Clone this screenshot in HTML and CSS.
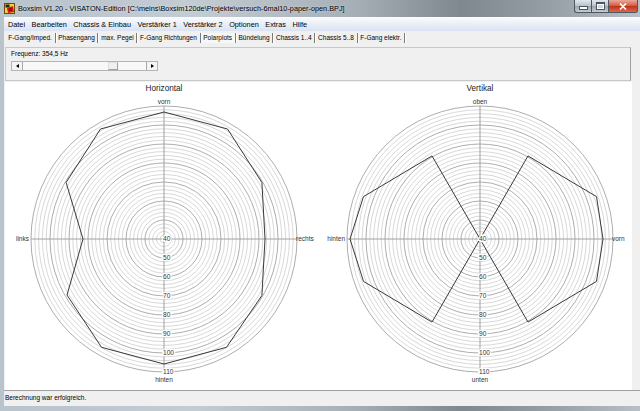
FILE: index.html
```html
<!DOCTYPE html>
<html lang="de">
<head>
<meta charset="utf-8">
<title>Boxsim</title>
<link rel="stylesheet" href="styles.css">
</head>
<body>
<div class="window">
  <div class="titlebar">
    <svg class="appicon" viewBox="0 0 11 11" width="11" height="11">
      <rect x="0.5" y="0.5" width="10" height="10" fill="#f2d23a" stroke="#6a4a10"/>
      <rect x="1.5" y="1.5" width="4" height="3" fill="#222"/>
      <path d="M3 5 L9 3 L10 9 L4 10 Z" fill="#d01818"/>
      <circle cx="6.5" cy="6.5" r="1.5" fill="#8a0a0a"/>
    </svg>
    <span class="title">Boxsim V1.20 - VISATON-Edition [C:\meins\Boxsim120de\Projekte\versuch-6mal10-paper-open.BPJ]</span>
    <div class="caption-buttons">
      <div class="cbtn cmin"><span class="glyph-min"></span></div>
      <div class="cbtn cmax"><span class="glyph-max"></span></div>
      <div class="cbtn cclose">
        <svg viewBox="0 0 8 7" width="8" height="7"><path d="M1 0.5 L7 6.5 M7 0.5 L1 6.5" stroke="#fff" stroke-width="1.6"/></svg>
      </div>
    </div>
  </div>
  <div class="frame">
    <div class="client">
      <div class="menubar">
        <span class="menuitem">Datei</span>
        <span class="menuitem">Bearbeiten</span>
        <span class="menuitem">Chassis &amp; Einbau</span>
        <span class="menuitem">Verstärker 1</span>
        <span class="menuitem">Verstärker 2</span>
        <span class="menuitem">Optionen</span>
        <span class="menuitem">Extras</span>
        <span class="menuitem">Hilfe</span>
      </div>
      <div class="tabs">
        <span class="tab">F-Gang/Imped.</span>
        <span class="tab">Phasengang</span>
        <span class="tab">max. Pegel</span>
        <span class="tab">F-Gang Richtungen</span>
        <span class="tab active">Polarplots</span>
        <span class="tab">Bündelung</span>
        <span class="tab">Chassis 1..4</span>
        <span class="tab">Chassis 5..8</span>
        <span class="tab">F-Gang elektr.</span>
      </div>
      <div class="panel">
        <div class="freq">Frequenz: 354,5 Hz</div>
        <div class="scrollbar">
          <div class="sbtn"><span class="tri-left"></span></div>
          <div class="track"><div class="thumb"></div></div>
          <div class="sbtn"><span class="tri-right"></span></div>
        </div>
      </div>
      <div class="plots">
        <svg class="plot-svg" width="627" height="308" viewBox="5 83 627 308">
          <defs>
            <g id="grid">
              <g class="ring">
                <circle r="3.8"/><circle r="7.6"/><circle r="11.4"/><circle r="15.2"/>
                <circle r="22.8"/><circle r="26.6"/><circle r="30.4"/><circle r="34.2"/>
                <circle r="41.8"/><circle r="45.6"/><circle r="49.4"/><circle r="53.2"/>
                <circle r="60.8"/><circle r="64.6"/><circle r="68.4"/><circle r="72.2"/>
                <circle r="79.8"/><circle r="83.6"/><circle r="87.4"/><circle r="91.2"/>
                <circle r="98.8"/><circle r="102.6"/><circle r="106.4"/><circle r="110.2"/>
                <circle r="117.8"/><circle r="121.6"/><circle r="125.4"/><circle r="129.2"/>
              </g>
              <g class="ring-major">
                <circle r="19"/><circle r="38"/><circle r="57"/><circle r="76"/>
                <circle r="95"/><circle r="114"/><circle r="133"/>
              </g>
              <path class="axis" d="M0 -133 V133 M-133 0 H133"/>
            </g>
            <g id="dblabels" class="db">
              <text x="-1" y="2.4">40</text>
              <text x="-1" y="21.4">50</text>
              <text x="-1" y="40.4">60</text>
              <text x="-1" y="59.4">70</text>
              <text x="-1" y="78.4">80</text>
              <text x="-1" y="97.4">90</text>
              <text x="-1" y="116.4">100</text>
              <text x="-1" y="135.4">110</text>
            </g>
          </defs>
          <rect x="5" y="83" width="627" height="308" fill="#fff"/>

          <!-- Horizontal -->
          <use href="#grid" transform="translate(164 240)"/>
          <polygon class="curve" points="164,113 227.5,130 261.9,183.5 265,240 261.9,296.5 226.5,348.3 164,365 101.5,348.3 67,296 83,240 66.1,183.5 100.5,130"/>
          <use href="#dblabels" transform="translate(164 240)"/>
          <text class="ptitle" x="164" y="91.5">Horizontal</text>
          <text class="dir mid" x="164" y="104.5">vorn</text>
          <text class="dir mid" x="164" y="382.5">hinten</text>
          <text class="dir end" x="29" y="242.3">links</text>
          <text class="dir" x="296" y="242.3">rechts</text>

          <!-- Vertikal -->
          <use href="#grid" transform="translate(480 240)"/>
          <polygon class="curve" points="480,240 528,156.9 596.5,197.6 603,240 596.5,282.4 575.3,295 528,323.1 480,240 432,323.1 363.5,282.4 350,240 363.5,197.6 432,156.9"/>
          <use href="#dblabels" transform="translate(480 240)"/>
          <text class="ptitle" x="480" y="91.5">Vertikal</text>
          <text class="dir mid" x="480" y="104.5">oben</text>
          <text class="dir mid" x="480" y="382.5">unten</text>
          <text class="dir end" x="345" y="242.3">hinten</text>
          <text class="dir" x="612" y="242.3">vorn</text>
        </svg>
      </div>
      <div class="statusbar">Berechnung war erfolgreich.</div>
    </div>
  </div>
</div>
</body>
</html>
```

FILE: styles.css
```css
html, body {
  margin: 0;
  padding: 0;
}
body {
  width: 640px;
  height: 411px;
  overflow: hidden;
  font-family: "Liberation Sans", Arial, sans-serif;
  color: #000;
}
.window {
  width: 640px;
  height: 411px;
  display: flex;
  flex-direction: column;
  background: linear-gradient(to right, #b9c3cc 0%, #c3cbd3 30%, #a7afb7 55%, #7f878f 72%, #949ca4 85%, #b8bfc6 100%);
}
.titlebar {
  height: 17px;
  display: flex;
  align-items: center;
  flex: none;
}
.appicon {
  margin: 0 3px 0 4px;
  flex: none;
}
.title {
  font-size: 7.3px;
  white-space: nowrap;
  color: #000;
  text-shadow: 0 0 3px rgba(255,255,255,0.7);
}
.caption-buttons {
  margin-left: auto;
  align-self: flex-start;
  display: flex;
  margin-right: 2px;
}
.cbtn {
  height: 13px;
  display: flex;
  align-items: center;
  justify-content: center;
  border: 1px solid #4e565f;
  border-top: none;
  box-sizing: border-box;
}
.cmin, .cmax {
  width: 17px;
  background: linear-gradient(#e2e7ec, #b8c1ca 50%, #9ba5af 51%, #c3ccd4);
  border-right: none;
}
.cmin { border-radius: 0 0 0 3px; }
.cclose {
  width: 30px;
  background: linear-gradient(#e9a99b, #d5563f 50%, #c0301a 51%, #d86a4a);
  border-radius: 0 0 3px 0;
}
.glyph-min {
  width: 7px;
  height: 2px;
  background: #fff;
  border: 1px solid #4a5560;
  margin-top: 4px;
}
.glyph-max {
  width: 7px;
  height: 5px;
  border: 1px solid #4a5560;
  box-shadow: inset 0 0 0 1px #fff;
  background: #cfd6dd;
  border-top-width: 2px;
}
.frame {
  flex: 1;
  display: flex;
  padding: 0 0 5px 4px;
  min-height: 0;
}
.client {
  flex: 1;
  display: flex;
  flex-direction: column;
  background: #f0f0f0;
  min-width: 0;
}
.menubar {
  height: 14px;
  flex: none;
  display: flex;
  align-items: center;
  gap: 6.5px;
  padding-left: 4px;
  background: linear-gradient(#fbfcfe, #e6ecf6 60%, #dbe3f2);
  font-size: 7.3px;
}
.tabs {
  height: 14px;
  flex: none;
  display: flex;
  align-items: center;
  padding-left: 1.5px;
  font-size: 6.5px;
  background: #f0f0f0;
}
.tab {
  padding: 0 2.7px;
  height: 10px;
  line-height: 10px;
  border-right: 1px solid #7a7a7a;
  box-shadow: 1px 0 0 #fff;
  white-space: nowrap;
}
.tab.active {
  background: #f7f7f7;
}
.panel {
  flex: none;
  height: 34px;
  margin: 2px 0 1px 1px;
  width: 626px;
  box-sizing: border-box;
  border: 1px solid #c8c8c8;
  border-right-color: #a0a0a0;
  background: #f0f0f0;
  padding: 2px 0 0 5px;
}
.freq {
  font-size: 6.5px;
  line-height: 8px;
  height: 8px;
}
.scrollbar {
  margin-top: 3px;
  width: 147px;
  height: 10px;
  display: flex;
  border: 1px solid #b4b4b4;
  box-sizing: border-box;
  background: #f8f8f8;
}
.sbtn {
  width: 10px;
  flex: none;
  display: flex;
  align-items: center;
  justify-content: center;
  background: #f4f4f4;
  border-right: 1px solid #a8a8a8;
}
.sbtn:last-child {
  border-right: none;
  border-left: 1px solid #a8a8a8;
}
.tri-left {
  width: 0;
  height: 0;
  border-top: 2.5px solid transparent;
  border-bottom: 2.5px solid transparent;
  border-right: 3px solid #000;
}
.tri-right {
  width: 0;
  height: 0;
  border-top: 2.5px solid transparent;
  border-bottom: 2.5px solid transparent;
  border-left: 3px solid #000;
}
.track {
  flex: 1;
  display: flex;
  padding-left: 85px;
}
.thumb {
  width: 10px;
  height: 8px;
  box-sizing: border-box;
  border: 1px solid #a0a0a0;
  border-top-color: #e0e0e0;
  border-left-color: #e0e0e0;
  background: #f0f0f0;
}
.plots {
  flex: none;
  height: 308px;
  margin-left: 1px;
  width: 627px;
  background: #fff;
}
.plot-svg {
  display: block;
}
.ring circle {
  fill: none;
  stroke: #d4d4d4;
  stroke-width: 0.9;
}
.ring-major circle {
  fill: none;
  stroke: #a4a4a4;
  stroke-width: 0.9;
}
.axis {
  fill: none;
  stroke: #a0a0a0;
  stroke-width: 1;
}
.curve {
  fill: none;
  stroke: #3a3a3a;
  stroke-width: 1;
  stroke-linejoin: miter;
}
.db text {
  font-family: "Liberation Sans", Arial, sans-serif;
  font-size: 6.6px;
  fill: #333;
  stroke: #fff;
  stroke-width: 2.5px;
  paint-order: stroke;
}
.ptitle {
  font-family: "Liberation Sans", Arial, sans-serif;
  font-size: 8.2px;
  fill: #222;
  text-anchor: middle;
}
.dir {
  font-family: "Liberation Sans", Arial, sans-serif;
  font-size: 6.5px;
  fill: #333;
}
.dir.mid { text-anchor: middle; }
.dir.end { text-anchor: end; }
.statusbar {
  flex: 1;
  border-top: 1px solid #a0a0a0;
  font-size: 6.5px;
  line-height: 13px;
  padding-left: 1px;
  background: #f0f0f0;
}
```
